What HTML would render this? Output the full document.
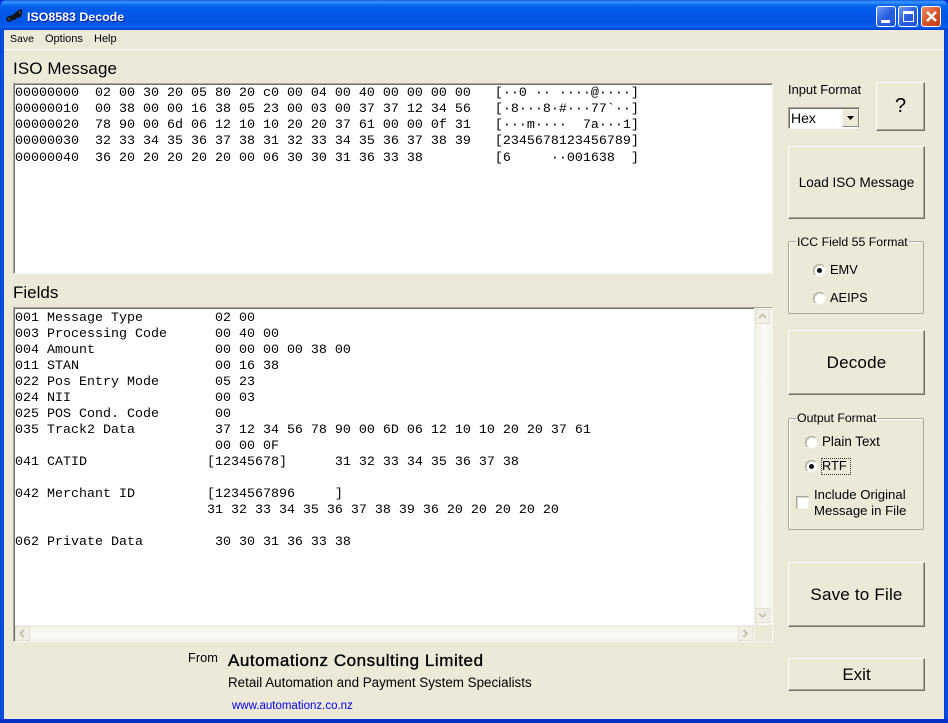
<!DOCTYPE html>
<html><head><meta charset="utf-8">
<style>
html,body{margin:0;padding:0;width:948px;height:723px;overflow:hidden;background:#0831d9}
*{box-sizing:border-box}
.a{position:absolute}
#win{position:absolute;left:0;top:0;width:948px;height:723px;background:linear-gradient(90deg,#0a3fd8 0,#0855dd 2px,#0855dd 3px,#0831d9 4px,#0831d9 944px,#0855dd 946px,#0a3fd8 948px);border-radius:7px 7px 0 0;overflow:hidden;font-family:"Liberation Sans",sans-serif;color:#000}
#tb{left:0;top:0;width:948px;height:30px;background:linear-gradient(180deg,#0a5ce8 0,#3d95ff 2px,#0a6af0 5px,#0058ea 10px,#0054e3 22px,#0660f0 27px,#003dd0 30px)}
#title{left:27px;top:9px;font-size:12.4px;font-weight:bold;color:#fff;line-height:16px;text-shadow:1px 1px 0 #0f1fa0;white-space:pre}
#body{left:4px;top:30px;width:940px;height:689px;background:#ece9d8}
#bot{left:0;top:719px;width:948px;height:4px;background:linear-gradient(180deg,#0831d9,#0430b8)}
.t{position:absolute;white-space:pre;line-height:16px;font-size:12px;color:#000}
.big{font-size:17px;line-height:18px}
.box{position:absolute;background:#fff;border:1px solid #fff;border-top-color:#aca899;border-left-color:#aca899;border-right-color:#f6f4ec;border-bottom-color:#f6f4ec;box-shadow:inset 1px 1px 0 #716f64}
.m{position:absolute;font-family:"Liberation Mono",monospace;font-size:13.33px;line-height:16px;white-space:pre;color:#000}
.btn{position:absolute;background:#ece9d8;border:1px solid;border-color:#fff #716f64 #716f64 #fff;box-shadow:inset -1px -1px 0 #aca899;text-align:center;color:#000;display:flex;align-items:center;justify-content:center}
.grp{position:absolute;border:1px solid #aca899;border-radius:2px;box-shadow:1px 1px 0 #fff inset}
.lg{position:absolute;background:#ece9d8;padding:0 1px;font-size:12.3px;line-height:14px;white-space:pre}
.r{position:absolute;width:13px;height:13px;border-radius:50%;background:#fff;border:1px solid;border-color:#aca899 #f1efe2 #f1efe2 #aca899;box-shadow:inset 1px 1px 0 #d8d5c6}
.r i{position:absolute;left:3px;top:3px;width:5px;height:5px;border-radius:50%;background:#111}
.sb{position:absolute;width:15px;height:15px;background:#f2f0e6;border:1px solid #e4e1d3}
.wb{position:absolute;top:6px;width:20px;height:21px;border:1px solid #fff;border-radius:3px}
</style></head><body>
<div id="win">
<div class="a" id="tb"></div>
<svg class="a" style="left:5px;top:8px" width="18" height="15" viewBox="0 0 18 15"><path d="M1 10 L2 13 L5 14 L7 12 L10 12 L12 10 L16 9 L17 5 L17 1 L14 2 L11 4 L8 7 L4 8 Z" fill="#14141c"/><path d="M14 3.5l1.5 2M3 10l2 2" stroke="#667" fill="none"/></svg>
<div class="a" id="title">ISO8583 Decode</div>

<div class="wb" style="left:876px;background:linear-gradient(135deg,#6f9cf5,#2a5fe0 50%,#2250d8)"><div class="a" style="left:4px;top:13px;width:9px;height:3px;background:#fff"></div></div>
<div class="wb" style="left:898px;background:linear-gradient(135deg,#6f9cf5,#2a5fe0 50%,#2250d8)"><div class="a" style="left:4px;top:4px;width:11px;height:11px;border:1px solid #fff;border-top:3px solid #fff"></div></div>
<div class="wb" style="left:921px;background:linear-gradient(135deg,#e8906e,#d9542c 50%,#c23a14)"><svg class="a" style="left:3px;top:3px" width="13" height="13" viewBox="0 0 13 13"><path d="M2 2 L11 11 M11 2 L2 11" stroke="#fff" stroke-width="2.4" fill="none"/></svg></div>

<div class="a" id="body"></div>
<div class="a" id="bot"></div>
<div class="a" style="left:4px;top:49px;width:940px;height:1px;background:#fbfaf5"></div>

<div class="t" style="left:10px;top:31px;font-size:10.5px">Save</div>
<div class="t" style="left:45px;top:31px;font-size:11px">Options</div>
<div class="t" style="left:94px;top:31px;font-size:11px">Help</div>

<div class="t big" style="left:13px;top:60px;letter-spacing:.1px">ISO Message</div>
<div class="t big" style="left:13px;top:284px">Fields</div>

<div class="box" style="left:13px;top:83px;width:760px;height:191px"></div>
<div class="m" style="left:15px;top:86px">00000000  02 00 30 20 05 80 20 c0 00 04 00 40 00 00 00 00   [··0 ·· ····@····]
00000010  00 38 00 00 16 38 05 23 00 03 00 37 37 12 34 56   [·8···8·#···77`··]
00000020  78 90 00 6d 06 12 10 10 20 20 37 61 00 00 0f 31   [···m····  7a···1]
00000030  32 33 34 35 36 37 38 31 32 33 34 35 36 37 38 39   [2345678123456789]</div>
<div class="m" style="left:15px;top:151px">00000040  36 20 20 20 20 20 00 06 30 30 31 36 33 38         [6     ··001638  ]</div>

<div class="box" style="left:13px;top:307px;width:760px;height:335px"></div>
<div class="m" style="left:15px;top:311px">001 Message Type         02 00
003 Processing Code      00 40 00
004 Amount               00 00 00 00 38 00
011 STAN                 00 16 38
022 Pos Entry Mode       05 23
024 NII                  00 03
025 POS Cond. Code       00
035 Track2 Data          37 12 34 56 78 90 00 6D 06 12 10 10 20 20 37 61
                         00 00 0F
041 CATID               [12345678]      31 32 33 34 35 36 37 38

042 Merchant ID         [1234567896     ]
                        31 32 33 34 35 36 37 38 39 36 20 20 20 20 20

062 Private Data         30 30 31 36 33 38</div>

<div class="a" style="left:754px;top:308px;width:18px;height:317px;background:linear-gradient(90deg,#f0eee4,#fbfaf6 60%,#f5f3ea)"></div>
<div class="a" style="left:15px;top:625px;width:739px;height:16px;background:linear-gradient(180deg,#f0eee4,#fbfaf6 60%,#f5f3ea)"></div>
<div class="a" style="left:754px;top:625px;width:18px;height:16px;background:#ece9d8"></div>
<div class="sb" style="left:755px;top:309px"><svg class="a" style="left:2px;top:3px" width="9" height="7"><path d="M1 5 L4.5 1.5 L8 5" stroke="#c6c3b4" stroke-width="2" fill="none"/></svg></div>
<div class="sb" style="left:755px;top:608px"><svg class="a" style="left:2px;top:3px" width="9" height="7"><path d="M1 1.5 L4.5 5 L8 1.5" stroke="#c6c3b4" stroke-width="2" fill="none"/></svg></div>
<div class="sb" style="left:15px;top:626px"><svg class="a" style="left:3px;top:2px" width="7" height="9"><path d="M5 1 L1.5 4.5 L5 8" stroke="#c6c3b4" stroke-width="2" fill="none"/></svg></div>
<div class="sb" style="left:738px;top:626px"><svg class="a" style="left:3px;top:2px" width="7" height="9"><path d="M1.5 1 L5 4.5 L1.5 8" stroke="#c6c3b4" stroke-width="2" fill="none"/></svg></div>

<div class="t" style="left:788px;top:82px;font-size:12.9px">Input Format</div>
<div class="box" style="left:788px;top:107px;width:72px;height:22px"></div>
<div class="t" style="left:791px;top:110px;font-size:14px">Hex</div>
<div class="a" style="left:842px;top:109px;width:17px;height:18px;background:#ece9d8;border:1px solid;border-color:#f6f4ec #8a887a #8a887a #f6f4ec"></div>
<svg class="a" style="left:847px;top:116px" width="8" height="5"><path d="M0 0H7L3.5 4Z" fill="#000"/></svg>

<div class="btn" style="left:876px;top:82px;width:49px;height:49px;font-size:20px">?</div>
<div class="btn" style="left:788px;top:146px;width:137px;height:73px;font-size:13.5px">Load ISO Message</div>

<div class="grp" style="left:788px;top:241px;width:136px;height:73px"></div>
<div class="lg" style="left:796px;top:235px">ICC Field 55 Format</div>
<div class="r" style="left:813px;top:264px"><i></i></div>
<div class="t" style="left:830px;top:262px;font-size:12.8px">EMV</div>
<div class="r" style="left:813px;top:292px"></div>
<div class="t" style="left:830px;top:290px;font-size:12.8px">AEIPS</div>

<div class="btn" style="left:788px;top:330px;width:137px;height:65px;font-size:17px;letter-spacing:.2px">Decode</div>

<div class="grp" style="left:788px;top:418px;width:136px;height:112px"></div>
<div class="lg" style="left:796px;top:411px">Output Format</div>
<div class="r" style="left:805px;top:436px"></div>
<div class="t" style="left:822px;top:434px;font-size:13.4px">Plain Text</div>
<div class="r" style="left:805px;top:460px"><i></i></div>
<div class="t" style="left:822px;top:458px;font-size:12.8px">RTF</div>
<div class="a" style="left:821px;top:458px;width:30px;height:17px;border:1px dotted #333"></div>
<div class="a" style="left:796px;top:496px;width:13px;height:13px;background:#fff;border:1px solid;border-color:#aca899 #f1efe2 #f1efe2 #aca899;box-shadow:inset 1px 1px 0 #d8d5c6"></div>
<div class="t" style="left:814px;top:487px;font-size:13.2px">Include Original
Message in File</div>

<div class="btn" style="left:788px;top:562px;width:137px;height:65px;font-size:17px;letter-spacing:.2px">Save to File</div>
<div class="btn" style="left:788px;top:658px;width:137px;height:33px;font-size:17px">Exit</div>

<div class="t" style="left:188px;top:650px;font-size:12.8px">From</div>
<div class="t" style="left:228px;top:652px;font-size:17px;line-height:18px;letter-spacing:.55px;-webkit-text-stroke:.35px #000">Automationz Consulting Limited</div>
<div class="t" style="left:228px;top:675px;font-size:13.4px">Retail Automation and Payment System Specialists</div>
<div class="t" style="left:232px;top:698px;font-size:11.5px;color:#0000e8">www.automationz.co.nz</div>
</div>
</body></html>
